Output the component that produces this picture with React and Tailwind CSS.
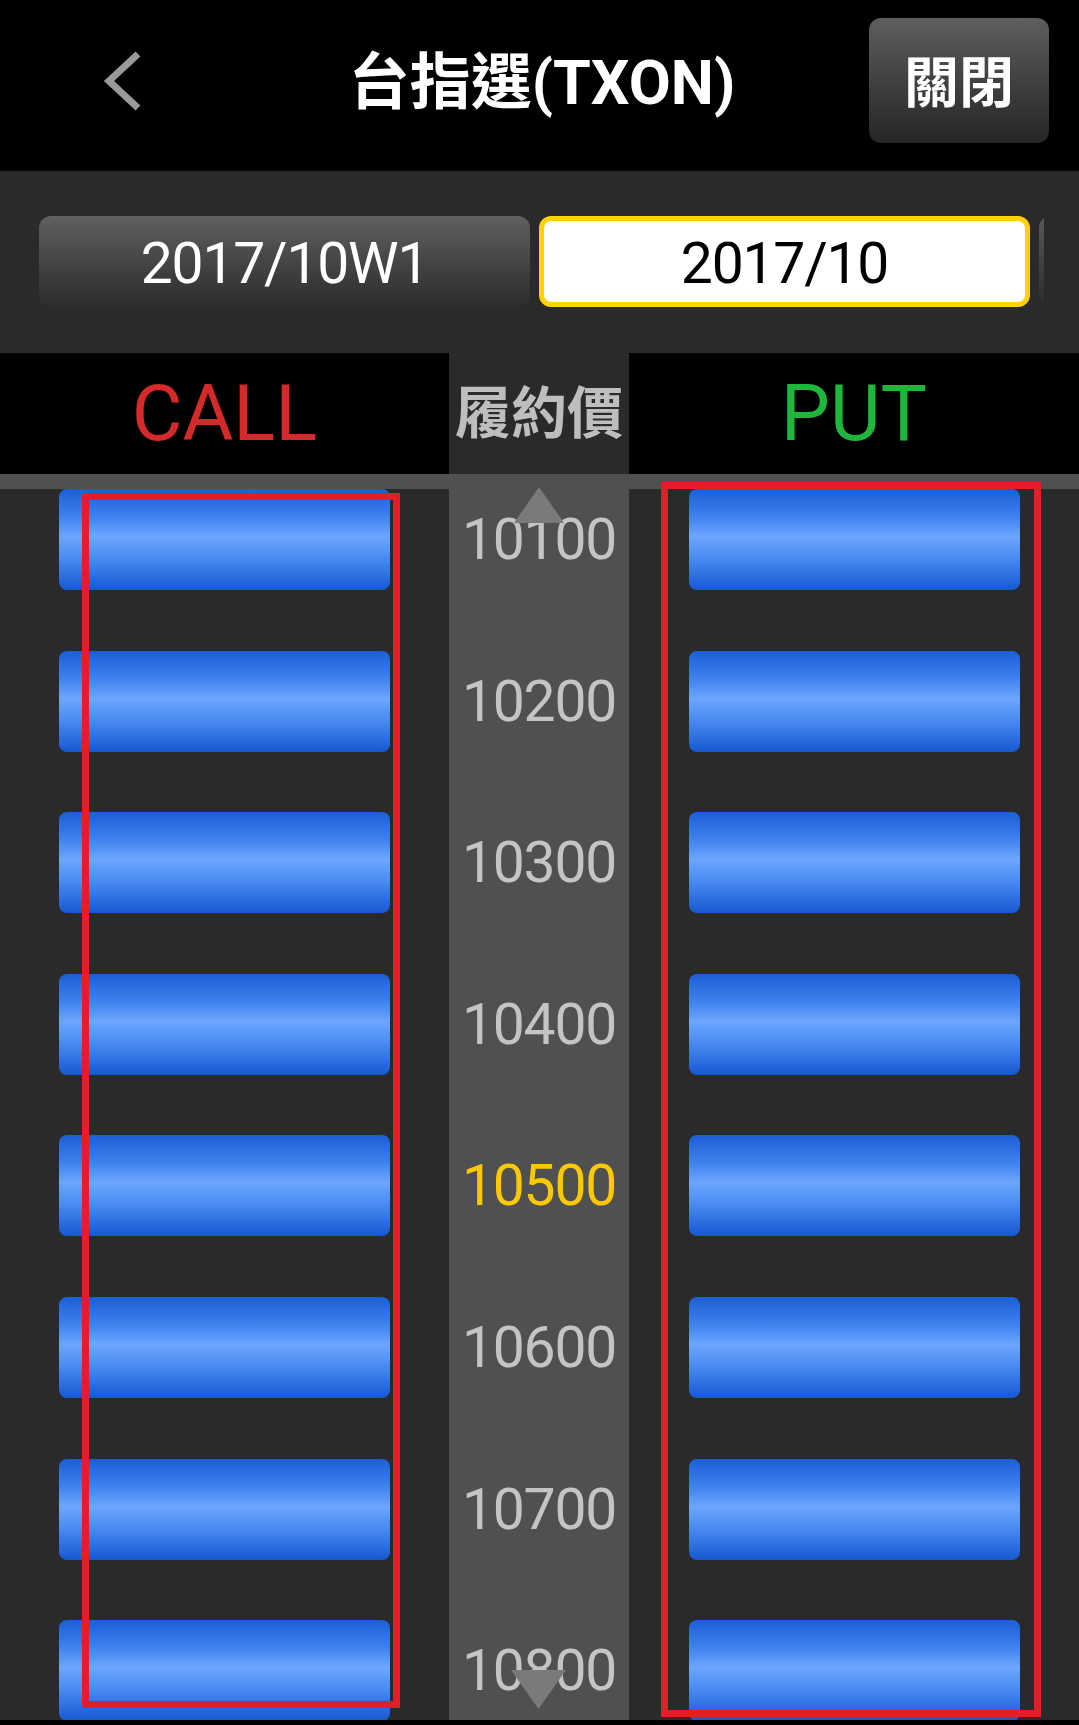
const strikes = [10100, 10200, 10300, 10400, 10500, 10600, 10700, 10800];

function Bar() {
  return (
    <div className="h-[101px] w-[331px] rounded-[8px] bg-[linear-gradient(to_bottom,#1b5ed7_0%,#3c80ec_26%,#6ca6ff_47%,#4a8cf1_68%,#1658d1_100%)]" />
  );
}

export default function App() {
  return (
    <div className="relative flex h-[1725px] w-[1079px] flex-col overflow-hidden bg-[#2a2a2a] font-[Roboto,'Noto_Sans_CJK_TC',sans-serif]">

      {/* Header */}
      <header className="flex h-[171px] shrink-0 items-center bg-black pb-[10px]">
        <div className="w-[215px] pl-[102px]">
          <svg width="40" height="60" viewBox="0 0 40 60">
            <polyline points="36,3 7,30 36,57" fill="none" stroke="#9a9a9a" strokeWidth="7" />
          </svg>
        </div>
        <h1 className="flex-1 pt-[6px] text-center text-[61px] font-bold leading-none text-white">
          台指選(TXON)
        </h1>
        <button className="mr-[30px] h-[125px] w-[180px] rounded-[12px] bg-gradient-to-b from-[#5e5e5e] to-[#262626] pt-[6px] text-[55px] font-bold leading-none text-white">
          關閉
        </button>
      </header>

      {/* Contract months */}
      <div className="flex h-[182px] w-[1044px] shrink-0 gap-[9px] overflow-hidden pl-[39px] pt-[45px]">
        <div className="flex h-[91px] w-[491px] shrink-0 items-center justify-center rounded-[12px] bg-gradient-to-b from-[#606060] to-[#2c2c2c] pt-[4px] text-[57px] leading-none tracking-[-1.2px] text-white">
          2017/10W1
        </div>
        <div className="flex h-[91px] w-[491px] shrink-0 items-center justify-center rounded-[12px] border-[5px] border-[#ffd200] bg-white pt-[4px] text-[57px] leading-none tracking-[-1.2px] text-black">
          2017/10
        </div>
        <div className="h-[91px] w-[491px] shrink-0 rounded-[12px] bg-gradient-to-b from-[#5a5a5a] to-[#2c2c2c]" />
      </div>

      {/* Column titles */}
      <div className="flex h-[121px] shrink-0">
        <div className="flex w-[449px] items-center justify-center bg-black text-[78px] leading-none text-[#d42a2b]">
          CALL
        </div>
        <div className="flex w-[180px] items-center justify-center text-[56px] font-bold leading-none text-[#bebebe]">
          履約價
        </div>
        <div className="flex flex-1 items-center justify-center bg-black text-[78px] leading-none text-[#1fb63c]">
          PUT
        </div>
      </div>

      <div className="h-[15px] shrink-0 bg-[#4f5051]" />

      {/* Strike rows */}
      <div className="flex flex-1 flex-col overflow-hidden">
        {strikes.map((s) => (
          <div key={s} className="flex h-[161.6px] shrink-0">
            <div className="w-[449px] pl-[59px]">
              <Bar />
            </div>
            <div className="w-[180px] bg-[#4f5051]">
              <div
                className={
                  s === 10500
                    ? "flex h-[101px] items-center justify-center text-[57px] leading-none tracking-[-1.2px] text-[#fcc800]"
                    : "flex h-[101px] items-center justify-center text-[57px] leading-none tracking-[-1.2px] text-[#c4c4c4]"
                }
              >
                {s}
              </div>
            </div>
            <div className="flex-1 pl-[60px]">
              <Bar />
            </div>
          </div>
        ))}
      </div>

      <div className="h-[5px] shrink-0 bg-black" />

      {/* scroll arrows */}
      <svg className="absolute left-[514px] top-[487px]" width="50" height="36" viewBox="0 0 50 36">
        <polygon points="25,0 50,36 0,36" fill="#7a7a7a" />
      </svg>
      <svg className="absolute left-[511px] top-[1670px]" width="55" height="39" viewBox="0 0 55 39">
        <polygon points="0,0 55,0 27.5,39" fill="#7a7a7a" />
      </svg>

      {/* annotation boxes */}
      <div className="absolute left-[82px] top-[493px] h-[1215px] w-[318px] border-[7px] border-[#e41e26]" />
      <div className="absolute left-[661px] top-[482px] h-[1235px] w-[380px] border-[7px] border-[#e41e26]" />
    </div>
  );
}
